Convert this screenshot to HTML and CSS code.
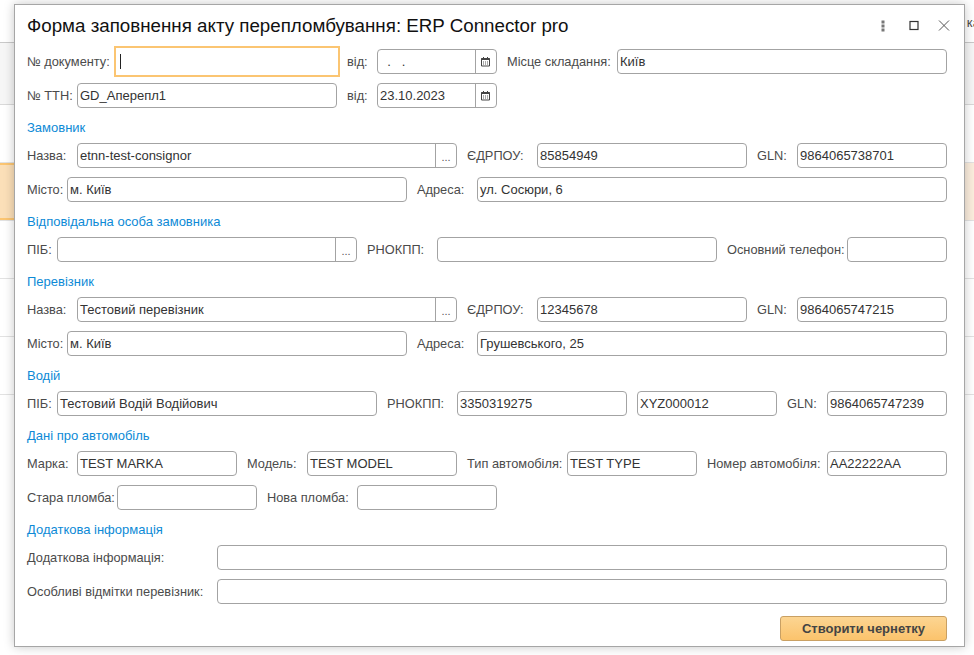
FILE: index.html
```html
<!DOCTYPE html>
<html lang="uk">

<head>
    <meta charset="UTF-8">
    <meta name="viewport" content="width=device-width, initial-scale=1.0">
    <title>Форма заповнення акту перепломбування</title>
    <link rel="stylesheet" href="styles.css">
</head>

<body>
    <div class="backdrop">
        <div class="bg-top"><span class="bg-text">ка</span></div>
        <div class="bg-row bg-grey"></div>
        <div class="bg-row"></div>
        <div class="bg-row bg-selected"><div class="bg-cell"></div></div>
        <div class="bg-row"></div>
        <div class="bg-row"></div>
        <div class="bg-row"></div>
    </div>

    <div class="dialog">
        <div class="dialog-head">
            <h1 class="dialog-title">Форма заповнення акту перепломбування: ERP Connector pro</h1>
            <div class="dialog-tools">
                <svg width="16" height="16" viewBox="0 0 16 16"><g fill="#777"><rect x="6.5" y="2.5" width="3" height="3"/><rect x="6.5" y="6.5" width="3" height="3"/><rect x="6.5" y="10.5" width="3" height="3"/></g></svg>
                <svg width="16" height="16" viewBox="0 0 16 16"><rect x="4" y="3.5" width="8" height="8" fill="none" stroke="#333" stroke-width="1.2"/></svg>
                <svg width="16" height="16" viewBox="0 0 16 16"><path d="M2 2.5l10 10M12 2.5l-10 10" fill="none" stroke="#555"/></svg>
            </div>
        </div>

        <div class="row row-doc">
            <label>№ документу:</label>
            <div class="field field-focus"><span class="caret"></span></div>
            <label class="pad7">від:</label>
            <div class="field field-date"><span class="value">&nbsp;&nbsp;.&nbsp;&nbsp;&nbsp;.</span><span class="side-btn"><svg width="11" height="11" viewBox="0 0 11 11"><use href="#cal"/></svg></span></div>
            <label>Місце складання:</label>
            <div class="field"><span class="value">Київ</span></div>
        </div>

        <div class="row row-ttn">
            <label>№ ТТН:</label>
            <div class="field"><span class="value">GD_Аперепл1</span></div>
            <label>від:</label>
            <div class="field field-date"><span class="value">23.10.2023</span><span class="side-btn"><svg width="11" height="11" viewBox="0 0 11 11"><use href="#cal"/></svg></span></div>
        </div>

        <h2 class="section">Замовник</h2>
        <div class="row row-company">
            <label>Назва:</label>
            <div class="field"><span class="value">etnn-test-consignor</span><span class="side-btn dots">...</span></div>
            <label>ЄДРПОУ:</label>
            <div class="field"><span class="value">85854949</span></div>
            <label>GLN:</label>
            <div class="field"><span class="value">9864065738701</span></div>
        </div>
        <div class="row row-city">
            <label>Місто:</label>
            <div class="field"><span class="value">м. Київ</span></div>
            <label>Адреса:</label>
            <div class="field"><span class="value">ул. Сосюри, 6</span></div>
        </div>

        <h2 class="section">Відповідальна особа замовника</h2>
        <div class="row row-person">
            <label>ПІБ:</label>
            <div class="field"><span class="value"></span><span class="side-btn dots">...</span></div>
            <label>РНОКПП:</label>
            <div class="field"></div>
            <label>Основний телефон:</label>
            <div class="field"></div>
        </div>

        <h2 class="section">Перевізник</h2>
        <div class="row row-company">
            <label>Назва:</label>
            <div class="field"><span class="value">Тестовий перевізник</span><span class="side-btn dots">...</span></div>
            <label>ЄДРПОУ:</label>
            <div class="field"><span class="value">12345678</span></div>
            <label>GLN:</label>
            <div class="field"><span class="value">9864065747215</span></div>
        </div>
        <div class="row row-city">
            <label>Місто:</label>
            <div class="field"><span class="value">м. Київ</span></div>
            <label>Адреса:</label>
            <div class="field"><span class="value">Грушевського, 25</span></div>
        </div>

        <h2 class="section">Водій</h2>
        <div class="row row-driver">
            <label>ПІБ:</label>
            <div class="field"><span class="value">Тестовий Водій Водійович</span></div>
            <label>РНОКПП:</label>
            <div class="field"><span class="value">3350319275</span></div>
            <span></span>
            <div class="field"><span class="value">XYZ000012</span></div>
            <label>GLN:</label>
            <div class="field"><span class="value">9864065747239</span></div>
        </div>

        <h2 class="section">Дані про автомобіль</h2>
        <div class="row row-car">
            <label>Марка:</label>
            <div class="field"><span class="value">TEST MARKA</span></div>
            <label>Модель:</label>
            <div class="field"><span class="value">TEST MODEL</span></div>
            <label>Тип автомобіля:</label>
            <div class="field"><span class="value">TEST TYPE</span></div>
            <label>Номер автомобіля:</label>
            <div class="field"><span class="value">AA22222AA</span></div>
        </div>
        <div class="row row-seal">
            <label>Стара пломба:</label>
            <div class="field"></div>
            <label>Нова пломба:</label>
            <div class="field"></div>
        </div>

        <h2 class="section">Додаткова інформація</h2>
        <div class="row row-info">
            <label>Додаткова інформація:</label>
            <div class="field"></div>
        </div>
        <div class="row row-info">
            <label>Особливі відмітки перевізник:</label>
            <div class="field"></div>
        </div>

        <div class="dialog-foot">
            <button type="button" class="btn-create">Створити чернетку</button>
        </div>
    </div>

    <svg width="0" height="0" class="defs">
        <symbol id="cal" viewBox="0 0 11 11">
            <path d="M1.5 2.5h8v7.5h-8z" fill="none" stroke="#444"/>
            <path d="M1.5 2h8v2h-8zM3 1h1v1.5h-1zM7 1h1v1.5h-1z" fill="#444"/>
            <path d="M3 5.5h1v1h-1zM5 5.5h1v1h-1zM7 5.5h1v1h-1zM3 7.5h1v1h-1zM5 7.5h1v1h-1zM7 7.5h1v1h-1z" fill="#555"/>
        </symbol>
    </svg>
</body>

</html>
```

FILE: styles.css
```css
* {
    box-sizing: border-box;
}

html,
body {
    height: 100%;
}

body {
    margin: 0;
    overflow: hidden;
    background-color: #fff;
    font-family: "Liberation Sans", Arial, sans-serif;
    font-size: 13px;
    color: #4b4b4b;
}

.defs {
    position: absolute;
}

/* page behind the dialog */
.backdrop {
    overflow: hidden;
}

.bg-top {
    height: 43px;
    border-bottom: 1px solid #c9c9c9;
    text-align: right;
    padding-top: 15px;
    white-space: nowrap;
}

.bg-text {
    margin-right: -6px;
}

.bg-row {
    height: 58px;
    border-bottom: 1px solid #e2e2e2;
}

.bg-grey {
    height: 62px;
    background-color: #f6f6f6;
    border-bottom-color: #d9d9d9;
}

.bg-selected {
    background-color: #fbeddd;
}

.bg-cell {
    width: 60px;
    height: 57px;
    background-color: #fbdfb8;
    border-top: 2px solid #fbc572;
    border-bottom: 2px solid #fbc572;
}

/* dialog */
.dialog {
    position: absolute;
    left: 14px;
    top: 4px;
    width: 951px;
    height: 643px;
    padding: 0 17px 0 12px;
    background-color: #fff;
    border: 1px solid #a6a6a6;
    box-shadow: 0 0 10px rgba(0, 0, 0, 0.22);
}

.dialog-head {
    display: flex;
    justify-content: space-between;
    align-items: center;
    height: 44px;
    padding-bottom: 2px;
    margin-right: -6px;
}

.dialog-title {
    margin: 0;
    font-size: 18.75px;
    font-weight: normal;
    color: #111;
}

.dialog-tools {
    display: flex;
    gap: 15px;
}

.section {
    margin: 0;
    height: 26px;
    padding-top: 3px;
    font-size: 13px;
    line-height: 15px;
    font-weight: normal;
    color: #0d8ad6;
}

.row {
    display: grid;
    align-items: center;
    height: 25px;
    margin-bottom: 9px;
}

.row label {
    font-size: 12.8px;
    white-space: nowrap;
}

.row label:not(:first-child) {
    padding-left: 10px;
}

.row label.pad7 {
    padding-left: 7px;
}

.row-doc {
    grid-template-columns: 87px 226px 37px 120px 120px 330px;
}

.row-ttn {
    grid-template-columns: 50px 260px 40px 120px;
}

.row-company {
    grid-template-columns: 50px 380px 80px 210px 50px 150px;
}

.row-city {
    grid-template-columns: 40px 340px 70px 470px;
}

.row-person {
    grid-template-columns: 30px 300px 80px 280px 130px 100px;
}

.row-driver {
    grid-template-columns: 30px 320px 80px 170px 10px 140px 50px 120px;
}

.row-car {
    grid-template-columns: 50px 160px 70px 150px 110px 130px 130px 120px;
}

.row-seal {
    grid-template-columns: 90px 140px 100px 140px;
}

.row-info {
    grid-template-columns: 190px 730px;
}

.field {
    display: flex;
    align-items: center;
    height: 25px;
    background-color: #fff;
    border: 1px solid #a3a3a3;
    border-radius: 4px;
    color: #333;
}

.field .value {
    flex: 1;
    padding-left: 2px;
    white-space: nowrap;
}

.field-focus {
    height: 31px;
    margin: -3px 0;
    border: 2px solid #fbc572;
    border-radius: 0;
    padding-left: 4px;
}

.caret {
    width: 1px;
    height: 15px;
    background-color: #222;
}

.side-btn {
    display: flex;
    align-items: center;
    justify-content: center;
    flex: none;
    width: 21px;
    height: 100%;
    border-left: 1px solid #a3a3a3;
}

.field-date .side-btn {
    padding: 0 1px 1px 0;
}

.dots {
    align-items: flex-end;
    padding-bottom: 4px;
    font-size: 11px;
    color: #555;
}

.dialog-foot {
    display: flex;
    justify-content: flex-end;
    margin-top: 12px;
}

.btn-create {
    width: 167px;
    height: 25px;
    padding: 0;
    background: linear-gradient(#fcd592, #fbc36c);
    border: 1px solid #c9a063;
    border-radius: 3px;
    font-family: inherit;
    font-size: 13px;
    font-weight: bold;
    color: #444;
}
```
